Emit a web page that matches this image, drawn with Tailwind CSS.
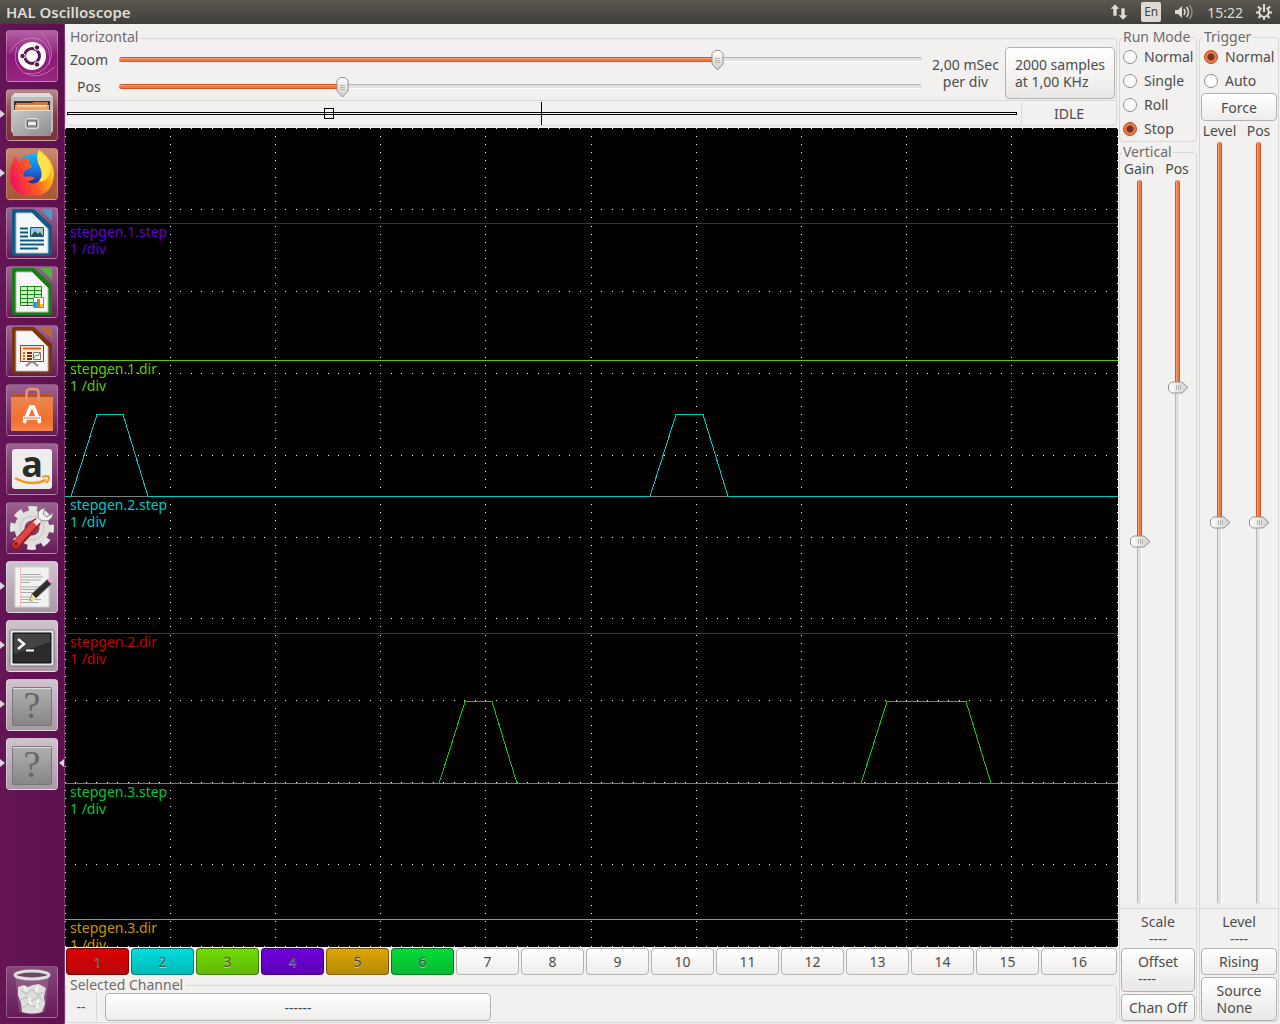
<!DOCTYPE html>
<html lang="en">
<head>
    <meta charset="UTF-8">
    <meta name="viewport" content="width=device-width, initial-scale=1.0">
    <title>HAL Oscilloscope</title>
    <script src="https://cdn.jsdelivr.net/npm/@tailwindcss/browser@4"></script>
    <style>
        /* GTK style sliders */
        input[type=range] { appearance: none; background: transparent; margin: 0; display: block; }
        input[type=range]::-webkit-slider-runnable-track {
            border-radius: 3px;
            height: 5px;
            background:
                linear-gradient(#d2542b 1px, #f59a72 1px, #f59a72 2px, #f07746 2px, #f07746 4px, #d2542b 4px) 0 0 / var(--fill) 100% no-repeat,
                linear-gradient(#b8b6b2 1px, #e0dfdc 1px, #e4e3e0 4px, #ffffff 4px);
        }
        input[type=range]::-webkit-slider-thumb {
            appearance: none;
            width: 13px;
            height: 21px;
            margin-top: -7px;
            background: url("data:image/svg+xml,%3Csvg xmlns='http://www.w3.org/2000/svg' width='13' height='21'%3E%3ClinearGradient id='g' x2='0' y2='1'%3E%3Cstop stop-color='%23fff'/%3E%3Cstop offset='1' stop-color='%23cfcdca'/%3E%3C/linearGradient%3E%3Cpath d='M4 .5h5l3 3v10.500l-5.500 6l-5.500 -6v-10.500z' fill='url(%23g)' stroke='%23959390' stroke-linejoin='round'/%3E%3Cpath d='M4 8.500h5M4 10.500h5M4 12.500h5' stroke='%23b5b3b0'/%3E%3C/svg%3E") no-repeat;
        }
        input[type=range].vertical { writing-mode: vertical-lr; direction: ltr; }
        input[type=range].vertical::-webkit-slider-runnable-track {
            width: 5px;
            height: 100%;
            background:
                linear-gradient(to right, #d2542b 1px, #f59a72 1px, #f59a72 2px, #f07746 2px, #f07746 4px, #d2542b 4px) 0 0 / 100% var(--fill) no-repeat,
                linear-gradient(to right, #b8b6b2 1px, #e0dfdc 1px, #e4e3e0 4px, #ffffff 4px);
        }
        input[type=range].vertical::-webkit-slider-thumb {
            width: 21px;
            height: 13px;
            margin: 0 0 0 -7px;
            background: url("data:image/svg+xml,%3Csvg xmlns='http://www.w3.org/2000/svg' width='21' height='13'%3E%3ClinearGradient id='g'%3E%3Cstop stop-color='%23fff'/%3E%3Cstop offset='1' stop-color='%23cfcdca'/%3E%3C/linearGradient%3E%3Cpath d='M3.500 1h10.500l6 5.500l-6 5.500h-10.500l-3 -3v-5z' fill='url(%23g)' stroke='%23959390' stroke-linejoin='round'/%3E%3Cpath d='M8.500 4v5M10.500 4v5M12.500 4v5' stroke='%23b5b3b0'/%3E%3C/svg%3E") no-repeat;
        }
    </style>
</head>
<body class="h-screen flex flex-col overflow-hidden bg-[#f2f1f0] text-[#4c4c4c] font-['Noto_Sans',sans-serif] text-sm leading-[17px]">

    <!-- Top panel -->
    <header class="h-6 shrink-0 flex items-center justify-between pl-1.5 pr-2 bg-linear-to-b from-[#5b5850] to-[#403f3a] text-[#dfdbd2]">
        <h1 class="font-semibold text-[15px] leading-[17px]">HAL Oscilloscope</h1>
        <div class="flex items-center gap-[13px]">
            <svg class="w-[18px] h-4" viewBox="0 0 18 16" fill="#dfdbd2"><path d="M5 0l5 5H7v7H3V5H0zM13 16l-5-5h3V4h4v7h3z" stroke="#45443f" stroke-width=".6"/></svg>
            <span class="w-5 h-5 rounded-xs bg-[#dfdbd2] text-[#45443f] text-xs leading-5 text-center">En</span>
            <svg class="w-5 h-4" viewBox="0 0 20 16" fill="none" stroke="#dfdbd2" stroke-width="1.5"><path d="M1 6h3l4-4v12l-4-4h-3z" fill="#dfdbd2" stroke="none"/><path d="M10 5q2 3 0 6"/><path d="M12.500 3q4 5 0 10"/><path d="M15.500 1q5 7 0 14" stroke="#8b8880"/></svg>
            <time>15:22</time>
            <svg class="w-4 h-4" viewBox="0 0 16 16" fill="none" stroke="#dfdbd2" stroke-width="2"><path d="M5.500 4a4.800 4.800 0 1 0 5 0"/><path d="M8 0v8M0 8.500h3M13 8.500h3M2 2.500l2 2M14 2.500l-2 2M2.500 14l2-2M13.500 14l-2-2M8 13v3"/></svg>
        </div>
    </header>

    <div class="flex-1 min-h-0 flex">

        <!-- Launcher -->
        <nav class="w-[65px] shrink-0 flex flex-col justify-between pt-1.5 pb-1.5 bg-linear-to-r from-[#651556] to-[#5d104f] border-r border-[#7c3a70]">
            <div class="flex flex-col gap-[7px]">
                <a href="#" aria-label="Dash" class="mx-1.5 w-[52px] h-[52px] rounded-sm border border-white/25 bg-linear-to-b from-[#b45fa6] via-[#8d1778] to-[#96267f]">
                    <svg viewBox="0 0 50 50"><g fill="none" stroke="#d79acb" stroke-opacity=".6"><path d="M2 22Q14 3 32 8Q46 15 42 34"/><path d="M34 2Q50 18 42 32Q34 46 18 42"/><path d="M48 36Q32 50 17 42Q4 32 10 16"/></g><circle cx="25" cy="25" r="14" fill="#fff"/><circle cx="25" cy="25" r="7.500" fill="none" stroke="#5e1450" stroke-width="3"/><g fill="#5e1450" stroke="#fff"><circle cx="15.500" cy="25" r="2.700"/><circle cx="30" cy="16.500" r="2.700"/><circle cx="30" cy="33.500" r="2.700"/></g></svg>
                </a>
                <a href="#" aria-label="Files" class="relative mx-1.5 w-[52px] h-[52px] rounded-sm border border-white/25 bg-linear-to-b from-[#b98a8a] via-[#893c45] to-[#7d2f3a]">
                    <svg viewBox="0 0 50 50"><defs><linearGradient id="steel" x2="1" y2="1"><stop stop-color="#c9c9c9"/><stop offset="1" stop-color="#8d8d8d"/></linearGradient></defs><path d="M4 7L8 3h34l4 4v34l-2 3H6l-2-3z" fill="#bdbdbd"/><path d="M4 7L8 3h34l4 4z" fill="#dcdcdc"/><path d="M7 11h36v12H7z" fill="#3a3430"/><path d="M9 13h16l2-1h14v10H9z" fill="#d8733c"/><path d="M8 15h34v7H8z" fill="#f0a55c"/><path d="M10 15h30v1.500H10z" fill="#fff1dc"/><path d="M6 20h38v26H6z" fill="url(#steel)"/><path d="M6 20.500h38" stroke="#ddd"/><rect x="18.500" y="28.500" width="13" height="10" rx="2" fill="#aaa" stroke="#ddd"/><rect x="20.500" y="31" width="9" height="5" fill="#eee" stroke="#555"/></svg>
                    <i class="absolute -left-[7px] top-5 border-y-4 border-l-5 border-y-transparent border-l-[#dcd3da]"></i>
                </a>
                <a href="#" aria-label="Firefox" class="relative mx-1.5 w-[52px] h-[52px] rounded-sm border border-white/25 bg-linear-to-b from-[#c98c72] via-[#b0623f] to-[#a8593a]">
                    <svg viewBox="0 0 50 50"><defs><linearGradient id="fox" x1="0" y1=".6" x2="1" y2=".2"><stop stop-color="#f2145c"/><stop offset=".45" stop-color="#ff5a24"/><stop offset=".8" stop-color="#ffb51c"/><stop offset="1" stop-color="#ffe84a"/></linearGradient><linearGradient id="globe" x2="0" y2="1"><stop stop-color="#16b4f4"/><stop offset=".5" stop-color="#1478e8"/><stop offset="1" stop-color="#262a90"/></linearGradient></defs><circle cx="26" cy="20" r="15" fill="url(#globe)"/><path d="M32 1Q46 10 47 25Q46 47 25 47Q3 46 3 27Q3 15 9 7L11 13Q17 8 23 10Q20 13 24 16L25 18L19 21Q14 25 18 28Q23 26 28 29Q25 32 20 32Q26 37 32 32Q37 27 33 18Q28 9 32 1z" fill="url(#fox)"/><path d="M32 1Q28 9 33 18Q37 27 32 32Q38 34 42 26Q47 13 32 1z" fill="#ffe24a"/></svg>
                    <i class="absolute -left-[7px] top-5 border-y-4 border-l-5 border-y-transparent border-l-[#dcd3da]"></i>
                </a>
                <a href="#" aria-label="Writer" class="mx-1.5 w-[52px] h-[52px] rounded-sm border border-white/25 bg-linear-to-b from-[#9b6391] to-[#651a57]">
                    <svg viewBox="0 0 50 50"><path d="M5 3q0-2 2-2h20l18 17v28q0 2-2 2H7q-2 0-2-2z" fill="#0d5c87"/><path d="M33 1h12v12z" fill="#4c9cc0"/><path d="M9 5h16l16 16v24H9z" fill="#f7f7f7" stroke="#b9bec2"/><path d="M13 20.500h8M13 24.500h8M13 28.500h8M13 32.500h24M13 36.500h24M13 40.500h18" stroke="#0c5a88" stroke-width="2"/><path d="M23.500 19.500h13v9h-13z" fill="#8bcbe8" stroke="#0c5a88"/><path d="M24 28l4-5 3 3 2-2 3 4z" fill="#444"/><circle cx="34" cy="22" r="1.500" fill="#f4c430"/></svg>
                </a>
                <a href="#" aria-label="Calc" class="mx-1.5 w-[52px] h-[52px] rounded-sm border border-white/25 bg-linear-to-b from-[#9b6391] to-[#651a57]">
                    <svg viewBox="0 0 50 50"><path d="M5 3q0-2 2-2h20l18 17v28q0 2-2 2H7q-2 0-2-2z" fill="#13800f"/><path d="M33 1h12v12z" fill="#4bb83a"/><path d="M9 5h16l16 16v24H9z" fill="#f7f7f7" stroke="#b9bec2"/><path d="M13.500 19.500h21v19h-21zM13.500 23.500h21M13.500 27.500h21M13.500 31.500h21M13.500 35.500h21M20.500 19.500v19M27.500 19.500v19" fill="#d5f5cd" stroke="#148a10"/><path d="M26.500 30.500h10v10h-10z" fill="#fff" stroke="#888"/><path d="M27 35h3v5h-3z" fill="#2a9be0"/><path d="M30 32h3v8h-3z" fill="#e86f28"/><path d="M33 37h3v3h-3z" fill="#f5c518"/></svg>
                </a>
                <a href="#" aria-label="Impress" class="mx-1.5 w-[52px] h-[52px] rounded-sm border border-white/25 bg-linear-to-b from-[#9b6391] to-[#651a57]">
                    <svg viewBox="0 0 50 50"><path d="M5 3q0-2 2-2h20l18 17v28q0 2-2 2H7q-2 0-2-2z" fill="#7d330c"/><path d="M33 1h12v12z" fill="#b9683a"/><path d="M9 5h16l16 16v24H9z" fill="#f7f7f7" stroke="#b9bec2"/><path d="M13.500 19.500h23v16h-23z" fill="#fdebdd" stroke="#a23f0c"/><path d="M16 22.500h18" stroke="#e0641e" stroke-width="2"/><path d="M16 27h2M16 30h2M16 33h2" stroke="#e0641e" stroke-width="2"/><path d="M20 27h5M20 30h5M20 33h5" stroke="#7d2c08" stroke-width="2"/><path d="M26.500 26.500h7v7h-7z" fill="#fff" stroke="#777"/><path d="M27 32l2-3 2 1 2-3" fill="none" stroke="#2ea52c"/><path d="M19 40l5-4h2l5 4" fill="none" stroke="#888" stroke-width="2"/></svg>
                </a>
                <a href="#" aria-label="Software" class="mx-1.5 w-[52px] h-[52px] rounded-sm border border-white/25 bg-linear-to-b from-[#9b6391] to-[#651a57]">
                    <svg viewBox="0 0 50 50"><defs><linearGradient id="bag" x2="0" y2="1"><stop stop-color="#e9854c"/><stop offset=".7" stop-color="#f3702c"/><stop offset="1" stop-color="#f4844b"/></linearGradient></defs><path d="M4 12l3-3h37l2 3z" fill="#b5522a"/><path d="M4 12h42v34H4z" fill="url(#bag)"/><path d="M19.500 16V8q0-4 4-4h4q4 0 4 4v8" fill="none" stroke="#f09468" stroke-width="2.500"/><path d="M17 38L23.500 22h3L33 38M16 33h18" fill="none" stroke="#fff" stroke-width="3.500"/><path d="M17 33h16" stroke="#ee6a28"/></svg>
                </a>
                <a href="#" aria-label="Amazon" class="mx-1.5 w-[52px] h-[52px] rounded-sm border border-white/25 bg-linear-to-b from-[#9b6391] to-[#651a57]">
                    <svg viewBox="0 0 50 50" class="overflow-visible"><rect x="5" y="5" width="40" height="40" rx="3" fill="#eeeeec"/><text x="25" y="33" text-anchor="middle" font-family="Open Sans" font-weight="700" font-size="36" fill="#2b2b2b">a</text><path d="M8 34Q24 43 39 36" fill="none" stroke="#f59b1c" stroke-width="2.500"/><path d="M35 33q6-2 7 0q0 4-3 6" fill="none" stroke="#f59b1c" stroke-width="2"/></svg>
                </a>
                <a href="#" aria-label="System Settings" class="mx-1.5 w-[52px] h-[52px] rounded-sm border border-white/25 bg-linear-to-b from-[#9b6391] to-[#651a57]">
                    <svg viewBox="0 0 50 50"><circle cx="25" cy="25" r="19" fill="none" stroke="#e4e4e2" stroke-width="6" stroke-dasharray="8.500 6.423" stroke-dashoffset="4"/><circle cx="25" cy="25" r="12.500" fill="none" stroke="#dfdfdd" stroke-width="10"/><circle cx="25" cy="25" r="12" fill="none" stroke="#c4c4c2"/><path d="M9 42L29 20" stroke="#9f1d1d" stroke-width="9" stroke-linecap="round"/><path d="M9 41L28 20" stroke="#e04444" stroke-width="6" stroke-linecap="round"/><path d="M28 21l8-8" stroke="#eee" stroke-width="5"/><path d="M38 5q-7 1-7 7t7 6q7 0 8-8l-6 4-4-3z" fill="#f4f4f4" stroke="#888"/><circle cx="9" cy="41" r="2" fill="#8d1717"/></svg>
                </a>
                <a href="#" aria-label="Text Editor" class="relative mx-1.5 w-[52px] h-[52px] rounded-sm border border-white/40 bg-linear-to-b from-[#cfc4cd] to-[#a899a5]">
                    <svg viewBox="0 0 50 50"><path d="M8 5h34v40H8z" fill="#f2f2f0" stroke="#d0d0ce"/><path d="M13.500 5v40" stroke="#f2a9a0" stroke-width=".7"/><path d="M14 12.500h20M14 15h22M14 18h20M14 20.500h9M14 25h20M14 27.500h22M14 30.500h16M14 35h12M14 37.500h20M14 40.500h17" stroke="#aaa"/><path d="M23 39l2-7L41 17l4 4-16 15z" fill="#2d2d2d" stroke="#555"/><path d="M40 18l3-3q3 1 4 3l-3 4z" fill="#e5a6cf"/><path d="M23 39l2-7 5 5z" fill="#f2e28c"/></svg>
                    <i class="absolute -left-[7px] top-5 border-y-4 border-l-5 border-y-transparent border-l-[#dcd3da]"></i>
                </a>
                <a href="#" aria-label="Terminal" class="relative mx-1.5 w-[52px] h-[52px] rounded-sm border border-white/40 bg-linear-to-b from-[#cfc4cd] to-[#a899a5]">
                    <svg viewBox="0 0 50 50"><rect x="3" y="9" width="44" height="36" rx="1" fill="#e8e8e8" stroke="#777"/><path d="M6 12h38v30H6z" fill="#2b2b2b" stroke="#111"/><path d="M7 13h36v8L7 33z" fill="#434343"/><path d="M11 18l6 5-6 5" fill="none" stroke="#fff" stroke-width="2.500"/><path d="M19 29.500h8" stroke="#fff" stroke-width="2"/></svg>
                    <i class="absolute -left-[7px] top-5 border-y-4 border-l-5 border-y-transparent border-l-[#dcd3da]"></i>
                </a>
                <a href="#" aria-label="Unknown application" class="relative mx-1.5 w-[52px] h-[52px] rounded-sm border border-white/40 bg-linear-to-b from-[#cfc4cd] to-[#a899a5]">
                    <svg viewBox="0 0 50 50"><defs><linearGradient id="plate" x2="0" y2="1"><stop stop-color="#b0b0b0"/><stop offset="1" stop-color="#868686"/></linearGradient></defs><rect x="5.500" y="7.500" width="39" height="38" rx="1" fill="url(#plate)" stroke="#777"/><path d="M6 8.500h38" stroke="#ddd"/><text x="25" y="38" text-anchor="middle" font-family="Liberation Serif" font-size="38" fill="#666">?</text></svg>
                    <i class="absolute -left-[7px] top-5 border-y-4 border-l-5 border-y-transparent border-l-[#dcd3da]"></i>
                </a>
                <a href="#" aria-label="HAL Oscilloscope" class="relative mx-1.5 w-[52px] h-[52px] rounded-sm border border-white/40 bg-linear-to-b from-[#cfc4cd] to-[#a899a5]">
                    <svg viewBox="0 0 50 50"><rect x="5.500" y="7.500" width="39" height="38" rx="1" fill="url(#plate)" stroke="#777"/><path d="M6 8.500h38" stroke="#ddd"/><text x="25" y="38" text-anchor="middle" font-family="Liberation Serif" font-size="38" fill="#666">?</text></svg>
                    <i class="absolute -left-[7px] top-5 border-y-4 border-l-5 border-y-transparent border-l-[#dcd3da]"></i>
                    <i class="absolute -right-[7px] top-5 border-y-4 border-r-5 border-y-transparent border-r-[#dcd3da]"></i>
                </a>
            </div>
            <a href="#" aria-label="Trash" class="mx-1.5 w-[52px] h-[52px] rounded-sm border border-white/25 bg-linear-to-b from-[#85467a] to-[#651a57]">
                <svg viewBox="0 0 50 50"><path d="M8 8l4 37q13 5 26 0l4-37z" fill="#ddd" fill-opacity=".2"/><path d="M11 20l6-2 4 2 5-2 6-1 7 4-2 9 1 7-3 8q-10 3-20 0l-1-9-3-8z" fill="#dededc"/><path d="M14 24l6 3 5-5 5 6 7-3M14 33l5-3 6 4 7-5 4 5M16 41l5-4 6 3 6-4" fill="none" stroke="#b4b4b2"/><path d="M17 20l3 4M31 19l-2 6M22 30l2 8M31 33l-1 8" stroke="#f6f6f6" stroke-width="2"/><ellipse cx="25" cy="8" rx="17" ry="4" fill="#6c4a66" stroke="#dededc" stroke-width="3"/></svg>
            </a>
        </nav>

        <!-- Scope window -->
        <main class="flex-1 min-w-0 flex flex-col">
            <section class="pt-3.5 pr-px pb-0.5">
                <fieldset class="relative h-[88px] flex flex-col border border-[#d9d7d4] rounded-sm">
                    <legend class="absolute -top-[11px] left-0.5 px-0.5 bg-[#f2f1f0] text-[#6e6c6a]">Horizontal</legend>
                    <div class="h-[62px] shrink-0 flex items-center border-b border-[#d9d7d4] pt-[7px] pr-px">
                        <div class="flex-1 min-w-0 flex flex-col gap-1.5 pl-1">
                            <div class="flex items-center">
                                <label for="h-zoom" class="w-[49px]">Zoom</label>
                                <input id="h-zoom" type="range" max="1000" value="749" class="flex-1 h-[21px]" style="--fill: 75%">
                            </div>
                            <div class="flex items-center">
                                <label for="h-pos" class="w-[49px] pl-[7px]">Pos</label>
                                <input id="h-pos" type="range" max="1000" value="275" class="flex-1 h-[21px]" style="--fill: 28%">
                            </div>
                        </div>
                        <p class="w-[83px] pl-1 text-center whitespace-nowrap">2,00 mSec<br>per div</p>
                        <button class="w-[110px] h-[52px] rounded border border-[#b4b2ae] bg-linear-to-b from-white to-[#e9e8e6]"><span class="inline-block text-left">2000 samples<br>at 1,00 KHz</span></button>
                    </div>
                    <div class="flex-1 flex items-center">
                        <svg class="flex-1 h-6" viewBox="0 0 955 24" preserveAspectRatio="none" fill="none" stroke="#000" shape-rendering="crispEdges"><rect x="1.500" y="11.500" width="949" height="2"/><rect x="258.500" y="7.500" width="9" height="10"/><path d="M475.500 1v23"/></svg>
                        <p class="w-[95px] h-[22px] border-l border-[#d9d7d4] leading-6 text-center">IDLE</p>
                    </div>
                </fieldset>
            </section>

            <div class="relative flex-1 min-h-0 overflow-hidden bg-black">
                <svg class="absolute inset-0 w-full h-full" viewBox="0 0 1053 819" preserveAspectRatio="none" fill="none" shape-rendering="crispEdges">
                    <path id="grid" fill="#fff"/>
                    <path d="M0 95.500H1053" stroke="#6400c8"/>
                    <path d="M0 232.500H1053" stroke="#64c800"/>
                    <path d="M0 368.500H6L32 286.500H58L83 368.500H585L611 286.500H638L663 368.500H1053" stroke="#00c8c8"/>
                    <path d="M6 368.500H83M585 368.500H663" stroke="#808080"/>
                    <path d="M0 505.500H1053" stroke="#c80000"/>
                    <path d="M0 655.500H374L400 573.500H427L452 655.500H796L822 573.500H901L926 655.500H1053" stroke="#00c832"/>
                    <path d="M374 655.500H452M796 655.500H926" stroke="#808080"/>
                    <path d="M0 791.500H1053" stroke="#c89600"/>
                </svg>
                <p class="absolute left-[5px] top-[95px] text-[#6400c8]">stepgen.1.step<br>1 /div</p>
                <p class="absolute left-[5px] top-[232px] text-[#64c800]">stepgen.1.dir<br>1 /div</p>
                <p class="absolute left-[5px] top-[368px] text-[#00c8c8]">stepgen.2.step<br>1 /div</p>
                <p class="absolute left-[5px] top-[505px] text-[#c80000]">stepgen.2.dir<br>1 /div</p>
                <p class="absolute left-[5px] top-[655px] text-[#00c832]">stepgen.3.step<br>1 /div</p>
                <p class="absolute left-[5px] top-[791px] text-[#c89600]">stepgen.3.dir<br>1 /div</p>
            </div>

            <div class="flex gap-0.5 pt-px pr-px pl-px h-7 shrink-0">
                <button class="flex-1 rounded border border-black/40 bg-linear-to-b from-[#dc0000] to-[#b80a0a] text-shadow-[0_1px_0_#ffffff80]">1</button>
                <button class="flex-1 rounded border border-black/40 bg-linear-to-b from-[#00dcdc] to-[#00baba] text-shadow-[0_1px_0_#ffffff80]">2</button>
                <button class="flex-1 rounded border border-black/40 bg-linear-to-b from-[#6edc00] to-[#62b80a] text-shadow-[0_1px_0_#ffffff80]">3</button>
                <button class="flex-1 rounded border border-black/40 bg-linear-to-b from-[#6e00dc] to-[#5f00b8] text-shadow-[0_1px_0_#ffffff80]">4</button>
                <button class="flex-1 rounded border border-black/40 bg-linear-to-b from-[#dca500] to-[#b88a0a] text-shadow-[0_1px_0_#ffffff80]">5</button>
                <button class="flex-1 rounded border border-black/40 bg-linear-to-b from-[#00dc37] to-[#0ab832] text-shadow-[0_1px_0_#ffffff80]">6</button>
                <button class="flex-1 rounded border border-[#b4b2ae] bg-linear-to-b from-white to-[#eeedeb]">7</button>
                <button class="flex-1 rounded border border-[#b4b2ae] bg-linear-to-b from-white to-[#eeedeb]">8</button>
                <button class="flex-1 rounded border border-[#b4b2ae] bg-linear-to-b from-white to-[#eeedeb]">9</button>
                <button class="flex-1 rounded border border-[#b4b2ae] bg-linear-to-b from-white to-[#eeedeb]">10</button>
                <button class="flex-1 rounded border border-[#b4b2ae] bg-linear-to-b from-white to-[#eeedeb]">11</button>
                <button class="flex-1 rounded border border-[#b4b2ae] bg-linear-to-b from-white to-[#eeedeb]">12</button>
                <button class="flex-1 rounded border border-[#b4b2ae] bg-linear-to-b from-white to-[#eeedeb]">13</button>
                <button class="flex-1 rounded border border-[#b4b2ae] bg-linear-to-b from-white to-[#eeedeb]">14</button>
                <button class="flex-1 rounded border border-[#b4b2ae] bg-linear-to-b from-white to-[#eeedeb]">15</button>
                <button class="w-[76px] rounded border border-[#b4b2ae] bg-linear-to-b from-white to-[#eeedeb]">16</button>
            </div>

            <section class="pt-2.5 pr-px pb-px">
                <fieldset class="relative h-[38px] flex items-end pb-px border border-[#d9d7d4] rounded-sm">
                    <legend class="absolute -top-[10px] left-0.5 px-0.5 bg-[#f2f1f0] text-[#6e6c6a]">Selected Channel</legend>
                    <span class="w-[31px] h-7 border-r border-[#d9d7d4] leading-7 text-center">--</span>
                    <button class="ml-2 w-[386px] h-7 rounded border border-[#b4b2ae] bg-linear-to-b from-white to-[#eeedeb]">------</button>
                </fieldset>
            </section>
        </main>

        <!-- Run mode and vertical controls -->
        <aside class="w-20 shrink-0 flex flex-col pt-[13px] pb-0.5 pl-px pr-px">
            <fieldset class="relative h-[105px] flex flex-col pt-2.5 pl-[3px] gap-[7px] border border-[#d9d7d4] rounded-sm">
                <legend class="absolute -top-[10px] left-0.5 px-px bg-[#f2f1f0] text-[#6e6c6a] whitespace-nowrap">Run Mode</legend>
                <label class="flex items-center gap-[7px]"><input type="radio" name="run" class="appearance-none w-3.5 h-3.5 rounded-full border border-[#8f8d89] bg-white checked:border-[#b8481f] checked:bg-[radial-gradient(#6e3a28_3px,#f07746_4px)]">Normal</label>
                <label class="flex items-center gap-[7px]"><input type="radio" name="run" class="appearance-none w-3.5 h-3.5 rounded-full border border-[#8f8d89] bg-white checked:border-[#b8481f] checked:bg-[radial-gradient(#6e3a28_3px,#f07746_4px)]">Single</label>
                <label class="flex items-center gap-[7px]"><input type="radio" name="run" class="appearance-none w-3.5 h-3.5 rounded-full border border-[#8f8d89] bg-white checked:border-[#b8481f] checked:bg-[radial-gradient(#6e3a28_3px,#f07746_4px)]">Roll</label>
                <label class="flex items-center gap-[7px]"><input type="radio" name="run" checked class="appearance-none w-3.5 h-3.5 rounded-full border border-[#8f8d89] bg-white checked:border-[#b8481f] checked:bg-[radial-gradient(#6e3a28_3px,#f07746_4px)]">Stop</label>
            </fieldset>
            <fieldset class="relative mt-2.5 flex-1 min-h-0 flex flex-col pt-[7px] border border-[#d9d7d4] rounded-sm">
                <legend class="absolute -top-[10px] left-0.5 px-px bg-[#f2f1f0] text-[#6e6c6a]">Vertical</legend>
                <div class="flex-1 min-h-0 grid grid-cols-2 pb-1">
                    <div class="flex flex-col items-center gap-[3px] min-h-0">
                        <label for="v-gain">Gain</label>
                        <input id="v-gain" type="range" max="1000" value="499" class="vertical flex-1 min-h-0 w-[21px]" style="--fill: 50%">
                    </div>
                    <div class="flex flex-col items-center gap-[3px] min-h-0">
                        <label for="v-pos">Pos</label>
                        <input id="v-pos" type="range" max="1000" value="282" class="vertical flex-1 min-h-0 w-[21px]" style="--fill: 29%">
                    </div>
                </div>
                <p class="h-10 pt-1 border-t border-[#d9d7d4] text-center">Scale<br>----</p>
                <div class="flex flex-col gap-0.5 px-px">
                    <button class="h-11 rounded border border-[#b4b2ae] bg-linear-to-b from-white to-[#e9e8e6]"><span class="inline-block text-left">Offset<br>----</span></button>
                    <button class="h-[27px] rounded border border-[#b4b2ae] bg-linear-to-b from-white to-[#eeedeb] whitespace-nowrap">Chan Off</button>
                </div>
            </fieldset>
        </aside>

        <!-- Trigger controls -->
        <aside class="w-[82px] shrink-0 flex flex-col pt-[13px] pb-0.5 pl-px pr-px">
            <fieldset class="relative flex-1 min-h-0 flex flex-col pt-2.5 border border-[#d9d7d4] rounded-sm">
                <legend class="absolute -top-[10px] left-[3px] px-px bg-[#f2f1f0] text-[#6e6c6a]">Trigger</legend>
                <div class="flex flex-col gap-[7px] pl-1">
                    <label class="flex items-center gap-[7px]"><input type="radio" name="trigger" checked class="appearance-none w-3.5 h-3.5 rounded-full border border-[#8f8d89] bg-white checked:border-[#b8481f] checked:bg-[radial-gradient(#6e3a28_3px,#f07746_4px)]">Normal</label>
                    <label class="flex items-center gap-[7px]"><input type="radio" name="trigger" class="appearance-none w-3.5 h-3.5 rounded-full border border-[#8f8d89] bg-white checked:border-[#b8481f] checked:bg-[radial-gradient(#6e3a28_3px,#f07746_4px)]">Auto</label>
                </div>
                <button class="mt-1 mb-px mx-px h-7 rounded border border-[#b4b2ae] bg-linear-to-b from-white to-[#eeedeb]">Force</button>
                <div class="flex-1 min-h-0 grid grid-cols-2 pb-1">
                    <div class="flex flex-col items-center gap-[3px] min-h-0">
                        <label for="t-level">Level</label>
                        <input id="t-level" type="range" max="1000" value="499" class="vertical flex-1 min-h-0 w-[21px]" style="--fill: 50%">
                    </div>
                    <div class="flex flex-col items-center gap-[3px] min-h-0">
                        <label for="t-pos">Pos</label>
                        <input id="t-pos" type="range" max="1000" value="499" class="vertical flex-1 min-h-0 w-[21px]" style="--fill: 50%">
                    </div>
                </div>
                <p class="h-10 pt-1 border-t border-[#d9d7d4] text-center">Level<br>----</p>
                <div class="flex flex-col gap-0.5 px-px">
                    <button class="h-[27px] rounded border border-[#b4b2ae] bg-linear-to-b from-white to-[#eeedeb]">Rising</button>
                    <button class="h-11 rounded border border-[#b4b2ae] bg-linear-to-b from-white to-[#e9e8e6]"><span class="inline-block text-left">Source<br>None</span></button>
                </div>
            </fieldset>
        </aside>
    </div>

    <script>
        // dotted graticule, 10 x 10 divisions with 10 dots each
        let dots = '';
        for (let div = 0; div <= 10; div++) {
            for (let i = 0; i <= 100; i++) {
                dots += `M${Math.floor(div * 105.2)} ${Math.floor(i * 8.18)}h1v1h-1z`;
                dots += `M${Math.floor(i * 10.52)} ${Math.floor(div * 81.8)}h1v1h-1z`;
            }
        }
        document.getElementById('grid').setAttribute('d', dots);
    </script>
</body>
</html>
